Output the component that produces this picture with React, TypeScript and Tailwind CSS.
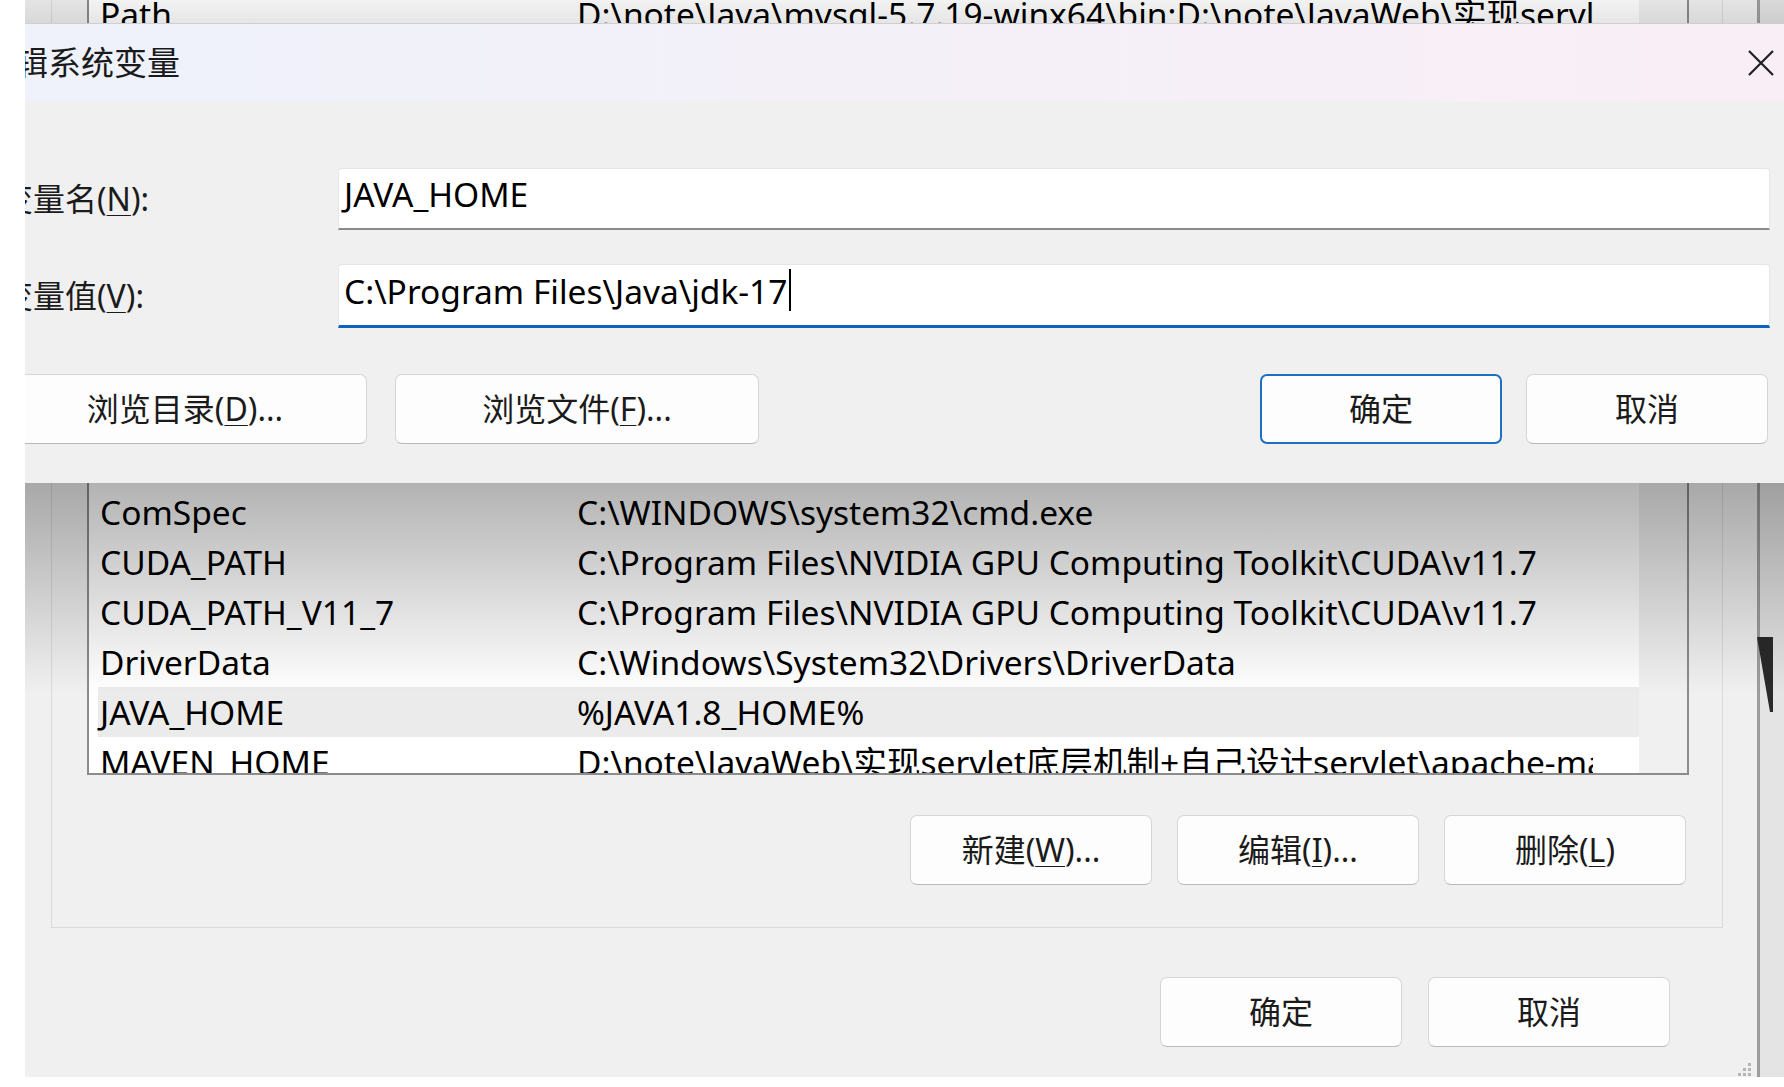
import React from "react";

type Row = { name: string; value: string; selected?: boolean };

const rows: Row[] = [
  { name: "ComSpec", value: "C:\\WINDOWS\\system32\\cmd.exe" },
  { name: "CUDA_PATH", value: "C:\\Program Files\\NVIDIA GPU Computing Toolkit\\CUDA\\v11.7" },
  { name: "CUDA_PATH_V11_7", value: "C:\\Program Files\\NVIDIA GPU Computing Toolkit\\CUDA\\v11.7" },
  { name: "DriverData", value: "C:\\Windows\\System32\\Drivers\\DriverData" },
  { name: "JAVA_HOME", value: "%JAVA1.8_HOME%", selected: true },
  { name: "MAVEN_HOME", value: "D:\\note\\JavaWeb\\实现servlet底层机制+自己设计servlet\\apache-maven-3.6.3" },
];

function Key({ k }: { k: string }) {
  return <span className="underline decoration-1 underline-offset-[4px]">{k}</span>;
}

function WinButton({
  children,
  className = "",
  focused = false,
}: {
  children: React.ReactNode;
  className?: string;
  focused?: boolean;
}) {
  return (
    <div
      className={
        "flex h-[70px] items-center justify-center rounded-[7px] bg-[#fdfdfd] text-[32px] text-[#1b1b1b] " +
        (focused
          ? "border-2 border-[#1d6fc6]"
          : "border border-[#d6d6d6] border-b-[#b9b9b9]") +
        " " +
        className
      }
    >
      {children}
    </div>
  );
}

function ListRow({ row }: { row: Row }) {
  return (
    <div className={"flex h-[50px] items-center text-[33.5px] leading-[50px] " + (row.selected ? "bg-[#ebebeb]" : "")}>
      <div className="w-[479px] pl-[2px] whitespace-nowrap">{row.name}</div>
      <div className="w-[1016px] overflow-hidden whitespace-nowrap">{row.value}</div>
    </div>
  );
}

export default function App() {
  return (
    <div className="h-[1087px] w-[1784px] overflow-hidden bg-white font-['Noto_Sans','Noto_Sans_CJK_SC',sans-serif] text-black">
      <div className="relative ml-[25px] flex h-[1077px] w-[1759px] overflow-hidden">
        {/* environment variables window behind */}
        <div className="relative flex w-[1732px] flex-col bg-[#f0f0f0]">
          <div className="ml-[26px] mt-[-40px] flex h-[968px] w-[1672px] flex-col border border-[#dadada]">
            <div className="ml-[35px] mt-[25px] flex h-[789px] w-[1602px] border-2 border-[#8c8c8c] bg-white">
              <div className="flex-1 overflow-hidden pl-[9px]">
                <div className="flex h-[52px] items-center text-[33.5px] leading-[52px]">
                  <div className="w-[479px] pl-[2px]">Path</div>
                  <div className="w-[1016px] overflow-hidden whitespace-nowrap">
                    {"D:\\note\\Java\\mysql-5.7.19-winx64\\bin;D:\\note\\JavaWeb\\实现servlet底层机制+自己设计servlet\\apache-maven-3.6.3\\bin"}
                  </div>
                </div>
                <div className="h-[447px]" />
                {rows.map((r) => (
                  <ListRow key={r.name} row={r} />
                ))}
              </div>
              <div className="w-[48px] bg-[#f0f0f0]" />
            </div>
            <div className="mt-[40px] flex justify-end gap-[25px] pr-[36px]">
              <WinButton className="w-[242px]">
                新建(<Key k="W" />)...
              </WinButton>
              <WinButton className="w-[242px]">
                编辑(<Key k="I" />)...
              </WinButton>
              <WinButton className="w-[242px]">
                删除(<Key k="L" />)
              </WinButton>
            </div>
          </div>
          <div className="mt-[49px] flex justify-end gap-[26px] pr-[87px]">
            <WinButton className="w-[242px]">确定</WinButton>
            <WinButton className="w-[242px]">取消</WinButton>
          </div>
          <svg className="absolute bottom-[1px] right-[5px]" width="14" height="14" viewBox="0 0 14 14">
            <rect x="10" y="1" width="3" height="3" fill="#b5b5b5" />
            <rect x="5" y="6" width="3" height="3" fill="#b5b5b5" />
            <rect x="10" y="6" width="3" height="3" fill="#b5b5b5" />
            <rect x="0" y="11" width="3" height="3" fill="#b5b5b5" />
            <rect x="5" y="11" width="3" height="3" fill="#b5b5b5" />
            <rect x="10" y="11" width="3" height="3" fill="#b5b5b5" />
          </svg>
        </div>
        <div className="w-[3px] bg-[#9d9d9d]" />
        <div className="relative flex-1 bg-[#e4e4e4]">
          <svg className="absolute left-[-4px] top-[630px]" width="20" height="90" viewBox="0 0 20 90">
            <polygon points="1,7 17,7 17,82 14,82" fill="#2a2a2a" />
          </svg>
        </div>

        {/* shadows cast by the dialog */}
        <div className="pointer-events-none absolute left-0 right-0 top-0 h-[23px] bg-linear-to-b from-black/[0.05] to-black/[0.1]" />
        <div className="pointer-events-none absolute left-0 right-0 top-[483px] h-[210px] bg-linear-to-b from-black/30 to-transparent" />

        {/* edit system variable dialog */}
        <div className="absolute left-[-60px] right-[-30px] top-[23px] flex h-[460px] flex-col border-t border-[#cfcfcf] bg-[#f0f0f0]">
          <div className="flex h-[77px] shrink-0 items-center justify-between bg-linear-to-r from-[#eef2fb] via-[#f4f0f8] to-[#faeef6] pl-[17px] pr-[40px]">
            <span className="text-[33px] text-[#1a1a1a]">编辑系统变量</span>
            <svg width="26" height="26" viewBox="0 0 26 26">
              <path d="M1 1 L25 25 M25 1 L1 25" stroke="#1f1f1f" strokeWidth="2.2" />
            </svg>
          </div>

          <div className="mt-[67px] flex h-[62px] items-center">
            <div className="w-[373px] pl-[36px] text-[32px] text-[#1b1b1b]">
              变量名(<Key k="N" />):
            </div>
            <div className="mr-[44px] h-full flex-1 rounded-t-[4px] border border-b-2 border-[#e6e6e6] border-b-[#8a8a8a] bg-white pl-[5px] text-[33.5px] leading-[50px]">
              JAVA_HOME
            </div>
          </div>

          <div className="mt-[34px] flex h-[64px] items-center">
            <div className="w-[373px] pl-[36px] text-[32px] text-[#1b1b1b]">
              变量值(<Key k="V" />):
            </div>
            <div className="mr-[44px] flex h-full flex-1 items-start rounded-t-[4px] border border-b-[3px] border-[#e6e6e6] border-b-[#0b63c1] bg-white pl-[5px] text-[33.5px] leading-[52px]">
              <span>{"C:\\Program Files\\Java\\jdk-17"}</span>
              <span className="ml-[2px] mt-[4px] inline-block h-[42px] w-[2px] bg-black" />
            </div>
          </div>

          <div className="mt-[46px] flex pl-[38px] pr-[46px]">
            <WinButton className="w-[364px]">
              浏览目录(<Key k="D" />)...
            </WinButton>
            <WinButton className="ml-[28px] w-[364px]">
              浏览文件(<Key k="F" />)...
            </WinButton>
            <div className="flex-1" />
            <WinButton focused className="w-[242px]">
              确定
            </WinButton>
            <WinButton className="ml-[24px] w-[242px]">取消</WinButton>
          </div>
        </div>
      </div>
    </div>
  );
}
